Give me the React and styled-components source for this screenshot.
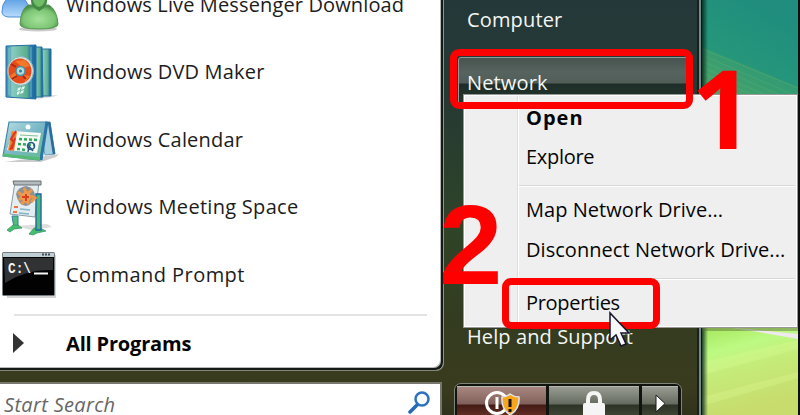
import styled, { createGlobalStyle, css } from "styled-components";

const GlobalStyle = createGlobalStyle`
  * {
    box-sizing: border-box;
  }

  body {
    margin: 0;
    overflow: hidden;
    font-family: "Open Sans", "Noto Sans", sans-serif;
    font-size: 20px;
  }
`;

// Desktop
const Desktop = styled.div`
  position: relative;
  display: flex;
  width: 800px;
  height: 415px;
  overflow: hidden;
  background: #0c0f0d;
`;

const Wallpaper = styled.svg`
  display: block;
  width: 96px;
  height: 415px;
`;

// Start menu
const StartMenu = styled.div`
  display: flex;
  width: 702px;
  height: 415px;
  background: linear-gradient(180deg, #24383a 0%, #263a33 25%, #2f4427 55%, #333c20 76%, #3a3b1e 93%, #30321c 100%);
`;

const LeftColumn = styled.div`
  display: flex;
  flex-direction: column;
  gap: 11px;
  width: 444px;
`;

const Programs = styled.div`
  display: flex;
  flex-direction: column;
  height: 371px;
  background: #fff;
  border-right: 1px solid #8b938b;
  border-bottom: 1px solid #85877a;
  border-bottom-right-radius: 8px;
  box-shadow: inset -2px -2px 0 #161a17, inset -3px -3px 0 #b5b8b5;
`;

const ProgramList = styled.div`
  margin-top: -30px;
`;

const Label = styled.span`
  color: #1c1c1c;
  line-height: 28px;
  white-space: nowrap;
  letter-spacing: ${(props) => props.$track || 0}px;
`;

const ProgramRow = styled.div`
  display: flex;
  align-items: center;
  height: 67.5px;

  ${Label} {
    padding-top: 2px;
  }
`;

const Icon = styled.svg`
  flex: none;
  width: 60px;
  height: 60px;
  margin-right: 6px;
`;

const Divider = styled.div`
  height: 2px;
  margin: 6px 16px 0 14px;
  background: #e3e3e3;
`;

const AllPrograms = styled.div`
  display: flex;
  align-items: center;
  height: 54px;
  padding-left: 12px;
  gap: 42px;

  ${Label} {
    padding-top: 2px;
    color: #050505;
    font-weight: 700;
  }
`;

const Search = styled.div`
  display: flex;
  align-items: flex-start;
  justify-content: space-between;
  width: 442px;
  height: 33px;
  padding: 7px 9px 0 4px;
  background: #fff;
  border-top: 2px solid #77796f;
  border-right: 2px solid #74766c;

  ${Label} {
    color: #666;
    font-style: italic;
  }
`;

// Right column
const Links = styled.div`
  display: flex;
  flex-direction: column;
  flex: 1;
  padding: 0 2px 0 10px;
  border-right: 1px solid #0e1514;
  box-shadow: inset -2px 0 0 #7b8986, inset -4px 0 0 #17211f;
`;

const Link = styled.div`
  width: 232px;
  height: ${(props) => props.$height}px;
  padding-top: ${(props) => props.$top}px;
  padding-left: 8px;
  margin-left: 4px;
  border: 1px solid transparent;

  ${(props) =>
    props.$active &&
    css`
      background: linear-gradient(180deg, #46534f 0%, #57635e 28%, #515d57 50%, #1e2d28 52%, #26382e 100%);
      border-color: #8f9995;
      border-radius: 3px;
    `}

  ${Label} {
    color: #f4f6f4;
    line-height: 28px;
  }
`;

const PowerBar = styled.div`
  display: grid;
  grid-template-columns: 89px 90px 36px;
  gap: 3px;
  width: 228px;
  height: 40px;
  margin-top: auto;
  margin-bottom: -8px;
  padding: 2px 2px 0;
  background: #10130e;
  border: 1px solid #80857a;
  border-radius: 7px;
`;

const PowerButton = styled.div`
  display: flex;
  justify-content: center;
  padding-top: ${(props) => props.$top}px;
  border-top: 1px solid #b5b8ae;
  background: ${(props) =>
    props.$warm
      ? "linear-gradient(180deg, #a98780 0, #80605a 17px, #431a14 18px, #6c3528 32px)"
      : "linear-gradient(180deg, #979b91 0, #666b60 17px, #2d3326 18px, #454c38 32px)"};
`;

const PowerIcon = styled.svg`
  flex: none;
  overflow: visible;
`;

// Context menu
const ContextMenu = styled.div`
  position: absolute;
  left: 463px;
  top: 94px;
  width: 335px;
  height: 234px;
  padding-top: 3px;
  display: flex;
  flex-direction: column;
  border: 1px solid #989898;
  box-shadow: inset 0 0 0 1px #fff;
  background: linear-gradient(90deg, transparent 53px, #dedede 53px, #dedede 54px, #fff 54px, #fff 55px, transparent 55px) #efefef;
`;

const MenuItem = styled.div`
  display: flex;
  align-items: center;
  flex: none;
  height: 39.5px;
  padding-left: 62px;

  ${Label} {
    color: #050505;
    font-weight: ${(props) => (props.$default ? 700 : 400)};
  }
`;

const MenuSeparator = styled.div`
  flex: none;
  height: 2px;
  margin: 8px 2px 3.5px 55px;
  background: linear-gradient(#d7d7d7 50%, #fff 50%);
`;

// Callouts over the screen
const Frame = styled.div`
  position: absolute;
  left: ${(props) => props.$x}px;
  top: ${(props) => props.$y}px;
  width: ${(props) => props.$w}px;
  height: ${(props) => props.$h}px;
  border: 7px solid #f00;
  border-radius: 9px;
`;

const StepNumber = styled.div`
  position: absolute;
  left: ${(props) => props.$x}px;
  top: ${(props) => props.$y}px;
  color: #f00;
  font-family: ${(props) => props.$font};
  font-size: ${(props) => props.$size}px;
  font-weight: 700;
  line-height: 110px;
`;

const Cursor = styled.svg`
  position: absolute;
  left: 608px;
  top: 311px;
`;

const MessengerIcon = () => (
  <Icon viewBox="0 0 60 60">
    <defs>
      <linearGradient id="buddyBlue" x1="0" y1="0" x2="0" y2="1">
        <stop offset="0" stopColor="#4f97e0" />
        <stop offset="1" stopColor="#b9dcfc" />
      </linearGradient>
      <radialGradient id="buddyGreen" cx=".5" cy=".6" r=".6">
        <stop offset="0" stopColor="#a4e19b" />
        <stop offset=".7" stopColor="#7cc573" />
        <stop offset="1" stopColor="#478848" />
      </radialGradient>
    </defs>
    <ellipse cx="38" cy="55" rx="19" ry="2.500" fill="#ccc" />
    <path d="M2 38q0-15 14-16 12 1 14 16v5H8q-6-1-6-5z" fill="url(#buddyBlue)" stroke="#4e8dd2" />
    <path d="M20 50q1-15 8-19h21q8 5 9 19 0 5-19 5t-19-5z" fill="url(#buddyGreen)" stroke="#579653" />
    <path d="M31 25h16q1 8-8 12-9-4-8-12z" fill="#438b45" />
    <path d="M33 25h12q0 6-6 8-6-2-6-8z" fill="#70bc68" />
  </Icon>
);

const DvdIcon = () => (
  <Icon viewBox="0 0 60 60">
    <defs>
      <linearGradient id="dvdCase">
        <stop offset="0" stopColor="#3389b7" />
        <stop offset=".25" stopColor="#85c9bb" />
        <stop offset=".7" stopColor="#5bae8c" />
        <stop offset=".82" stopColor="#287bab" />
        <stop offset="1" stopColor="#1b639f" />
      </linearGradient>
    </defs>
    <path d="M36 55l22-1-5 2-15 2z" fill="#ddd" />
    <path d="M41 8h10v47H41z" fill="url(#dvdCase)" stroke="#246ea0" />
    <path d="M33 6h9l1 50H33z" fill="url(#dvdCase)" stroke="#246ea0" />
    <path d="M6 5l30-1v54L6 56z" fill="url(#dvdCase)" stroke="#246fa5" />
    <path d="M9 7v47M12 6v49M31 6v50" stroke="#b0dfd2" strokeWidth=".8" opacity=".7" />
    <ellipse cx="20.500" cy="30" rx="13" ry="14.500" fill="#d3e0dd" stroke="#88b3bb" />
    <ellipse cx="20" cy="30" rx="11.500" ry="12.500" fill="#e74b1a" />
    <path d="M15 20l10-1 5 6-7 2zM10 35l5-4 2 5-3 3zM24 34l6 1-5 6z" fill="#f27928" />
    <path d="M11 23l5 3M12 38l5-3M26 38l-3-3" stroke="#af2813" strokeWidth="2" />
    <circle cx="20.500" cy="30" r="4.500" fill="#b6dbd8" stroke="#438fa8" strokeWidth="1.500" />
    <circle cx="20.500" cy="30" r="1.500" fill="#287e9e" />
    <path d="M18 47l3-1-1 3-3 1zM22 46l3-1-1 3-3 1zM17 51l3-1-1 3-2 1zM21 50l3-1-1 3-3 1z" fill="#e1f6ed" />
  </Icon>
);

const CalendarIcon = () => (
  <Icon viewBox="0 0 60 60">
    <defs>
      <linearGradient id="calFrame" x1="0" y1="0" x2="1" y2="1">
        <stop offset="0" stopColor="#b8dee5" />
        <stop offset=".5" stopColor="#78b6c4" />
        <stop offset="1" stopColor="#62bd8a" />
      </linearGradient>
    </defs>
    <path d="M5 53l54-8-3 3-15 5z" fill="#ccc" />
    <path d="M45 13h5l5 32-10 1-4-20z" fill="#a6d0dc" stroke="#639ec0" />
    <path d="M49 13l5 32" stroke="#286ba0" strokeWidth="2.500" />
    <path d="M9 13h38l-7 38-37-4z" fill="url(#calFrame)" stroke="#3f88aa" strokeWidth="1.200" />
    <path d="M47 13l-6 38" stroke="#2a74a8" strokeWidth="3" />
    <path d="M3 46l37 4" stroke="#57ba73" strokeWidth="3" />
    <path d="M13 22l28 2-4 20-30-3z" fill="#f6faf6" />
    <path d="M12 22l5 1-3 19-6-1z" fill="#ed802d" />
    <path d="M16 22l-5 8 3 3-4 8M15 29l-3 11" stroke="#dc3520" strokeWidth="2" fill="none" />
    <path d="M20 26l18 1" stroke="#81c099" />
    <path d="M19 30l19 1M18 35l17 1M17 40l9 1" stroke="#2eaa5d" strokeWidth="2.500" strokeDasharray="3 2" />
    <circle cx="31" cy="37" r="3.500" fill="none" stroke="#275984" strokeWidth="1.600" />
    <path d="M28 43l1-6 4 5" stroke="#275984" strokeWidth="1.500" fill="none" />
    <circle cx="28" cy="18" r="2.500" fill="#f5ffff" />
  </Icon>
);

const MeetingIcon = () => (
  <Icon viewBox="0 0 60 60">
    <path d="M15 50l32-2 5 3-21 3z" fill="#ddd" />
    <path d="M12 40h6v12h-4z" fill="#55bd76" stroke="#2980aa" />
    <path d="M7 54l6-5h5l4 3-8 1-4 3zM29 58l5-6h6l6 3-9 2-4 2z" fill="#46bd69" stroke="#379678" strokeWidth=".8" />
    <path d="M15 6h24l-4 35-25-3z" fill="#e4edf0" stroke="#8b9da5" />
    <path d="M36 18h5v36h-5z" fill="#4cb77a" stroke="#20689f" strokeWidth="1.400" />
    <path d="M13 5h28v4H14z" fill="#b4b9bc" stroke="#646e72" />
    <path d="M16 18q2-7 10-8 8 2 9 9-1 9-9 11-8-1-10-12z" fill="#8a9094" />
    <path d="M18 16l5 4-4 4M24 12l3 6 5-4M31 20l4 2-4 4M21 28l5-4 3 4" stroke="#eb9849" strokeWidth="3" fill="none" />
    <circle cx="26" cy="21" r="5" fill="#f09a53" />
    <path d="M26 18v7M22 21h7" stroke="#df3d20" strokeWidth="2" />
    <path d="M14 31h4M13 36h4" stroke="#eb7642" strokeWidth="2" />
    <path d="M20 33l10 1M19 37l10 1" stroke="#83b4ca" strokeWidth="1.500" />
  </Icon>
);

const PromptIcon = () => (
  <Icon viewBox="0 0 60 60">
    <path d="M5 11h51v43H7z" fill="#bbb" opacity=".65" />
    <rect x="2.500" y="8.500" width="52" height="43" rx="1" fill="#020202" stroke="#777e82" />
    <path d="M4 14h49v12Q26 25 5 39z" fill="#313234" />
    <path d="M3 9h51v4H3z" fill="#bfcdd4" />
    <path d="M42 10.500h9" stroke="#404c53" strokeWidth="2" strokeDasharray="2 1" />
    <path d="M34 29.500h14" stroke="#f7f7f7" strokeWidth="2" />
    <text x="8" y="29" fill="#f5f5f5" fontFamily="Liberation Mono, monospace" fontSize="14" fontWeight="700" textLength="23" lengthAdjust="spacingAndGlyphs">C:\</text>
  </Icon>
);

const programs = [
  { name: "Windows Live Messenger Download", icon: MessengerIcon, track: 0.13 },
  { name: "Windows DVD Maker", icon: DvdIcon, track: 0.18 },
  { name: "Windows Calendar", icon: CalendarIcon, track: 0.19 },
  { name: "Windows Meeting Space", icon: MeetingIcon, track: 0.29 },
  { name: "Command Prompt", icon: PromptIcon, track: 0.45 },
];

const App = () => {
  return (
    <Desktop>
      <GlobalStyle />
      <StartMenu>
        <LeftColumn>
          <Programs>
            <ProgramList>
              {programs.map(({ name, icon: ProgramIcon, track }) => (
                <ProgramRow key={name}>
                  <ProgramIcon />
                  <Label $track={track}>{name}</Label>
                </ProgramRow>
              ))}
            </ProgramList>
            <Divider />
            <AllPrograms>
              <svg width="12" height="20">
                <path d="M1 0l11 10L1 20z" fill="#333" />
              </svg>
              <Label $track={-0.17}>All Programs</Label>
            </AllPrograms>
          </Programs>
          <Search>
            <Label $track={0.33}>Start Search</Label>
            <svg width="23" height="23">
              <path d="M2 21l8-8" stroke="#2468b7" strokeWidth="3.500" strokeLinecap="round" />
              <circle cx="14" cy="8" r="6.500" fill="#f8fcff" stroke="#2d72be" strokeWidth="2.500" />
            </svg>
          </Search>
        </LeftColumn>
        <Links>
          <Link $height={57} $top={5}>
            <Label $track={0.15}>Computer</Label>
          </Link>
          <Link $height={52} $top={11} $active>
            <Label $track={0.15}>Network</Label>
          </Link>
          <Link $height={250} $top={213}>
            <Label $track={0.1}>Help and Support</Label>
          </Link>
          <PowerBar>
            <PowerButton $warm $top={4}>
              <PowerIcon width="36" height="26">
                <circle cx="13" cy="12" r="10.500" fill="none" stroke="#fff" strokeWidth="3" />
                <path d="M13 6v12" stroke="#fff" strokeWidth="3" />
                <path d="M26 3q4 3 9 3 1 12-9 18-9-6-8-18 4 0 8-3z" fill="#f6a51d" stroke="#dde3e8" strokeWidth="1.500" />
                <path d="M26 8v8M26 18v3" stroke="#17120a" strokeWidth="3" />
              </PowerIcon>
            </PowerButton>
            <PowerButton $top={4}>
              <PowerIcon width="24" height="27">
                <path d="M6 13V9q0-7 6-7t6 7v4" fill="none" stroke="#f5f5f5" strokeWidth="4" />
                <rect x="1" y="12" width="22" height="18" rx="2" fill="#f5f5f5" />
              </PowerIcon>
            </PowerButton>
            <PowerButton $top={8}>
              <PowerIcon width="11" height="18">
                <path d="M1 0v17l9-8.500z" fill="#fff" stroke="#1a1c17" />
              </PowerIcon>
            </PowerButton>
          </PowerBar>
        </Links>
      </StartMenu>
      <Wallpaper viewBox="0 0 96 415">
        <defs>
          <linearGradient id="aurora" x1=".6" y1="0" x2="0" y2="1">
            <stop offset="0" stopColor="#208d7e" />
            <stop offset=".6" stopColor="#26977a" />
            <stop offset="1" stopColor="#49a56a" />
          </linearGradient>
          <linearGradient id="meadow" x1="0" y1="0" x2=".3" y2="1">
            <stop offset="0" stopColor="#a5e65b" />
            <stop offset=".3" stopColor="#bdfa83" />
            <stop offset=".55" stopColor="#c5eb79" />
            <stop offset="1" stopColor="#c7dc6d" />
          </linearGradient>
          <linearGradient id="edgeShade">
            <stop offset="0" stopColor="#06231c" stopOpacity=".85" />
            <stop offset="1" stopColor="#06231c" stopOpacity="0" />
          </linearGradient>
        </defs>
        <rect width="96" height="96" fill="url(#aurora)" />
        <path d="M0 47l96 40v9H0z" fill="#58aa60" opacity=".3" />
        <path d="M0 49l96 39M0 55l94 41M0 61l80 35M0 67l66 29M0 73l53 23M0 79l40 17" stroke="#76bb6e" opacity=".25" />
        <rect y="327" width="96" height="88" fill="url(#meadow)" />
        <path d="M24 327l72 7v5L44 330z" fill="#efe9ed" />
        <path d="M0 362l96-22v9L0 375zM0 397l96-25v6L0 406z" fill="#e4ff9c" opacity=".25" />
        <rect width="6" height="415" fill="url(#edgeShade)" />
        <rect y="327" width="96" height="4" fill="#5a693c" opacity=".45" />
      </Wallpaper>
      <ContextMenu>
        <MenuItem $default>
          <Label $track={1}>Open</Label>
        </MenuItem>
        <MenuItem>
          <Label $track={-0.3}>Explore</Label>
        </MenuItem>
        <MenuSeparator />
        <MenuItem>
          <Label $track={0.05}>Map Network Drive...</Label>
        </MenuItem>
        <MenuItem>
          <Label $track={0.05}>Disconnect Network Drive...</Label>
        </MenuItem>
        <MenuSeparator />
        <MenuItem>
          <Label $track={-0.3}>Properties</Label>
        </MenuItem>
      </ContextMenu>
      <Frame $x={450} $y={49} $w={243} $h={60} />
      <Frame $x={502} $y={278} $w={158} $h={51} />
      <StepNumber $x={691} $y={51} $size={110} $font={'"Open Sans", sans-serif'}>1</StepNumber>
      <StepNumber $x={439} $y={190} $size={114} $font={'"Liberation Sans", Arial, sans-serif'}>2</StepNumber>
      <Cursor width="26" height="38">
        <path d="M2 2v27l6-5 5 11 5-2-5-11h8z" fill="#f8f8fa" stroke="#15152a" strokeWidth="1.500" />
      </Cursor>
    </Desktop>
  );
};

export default App;
